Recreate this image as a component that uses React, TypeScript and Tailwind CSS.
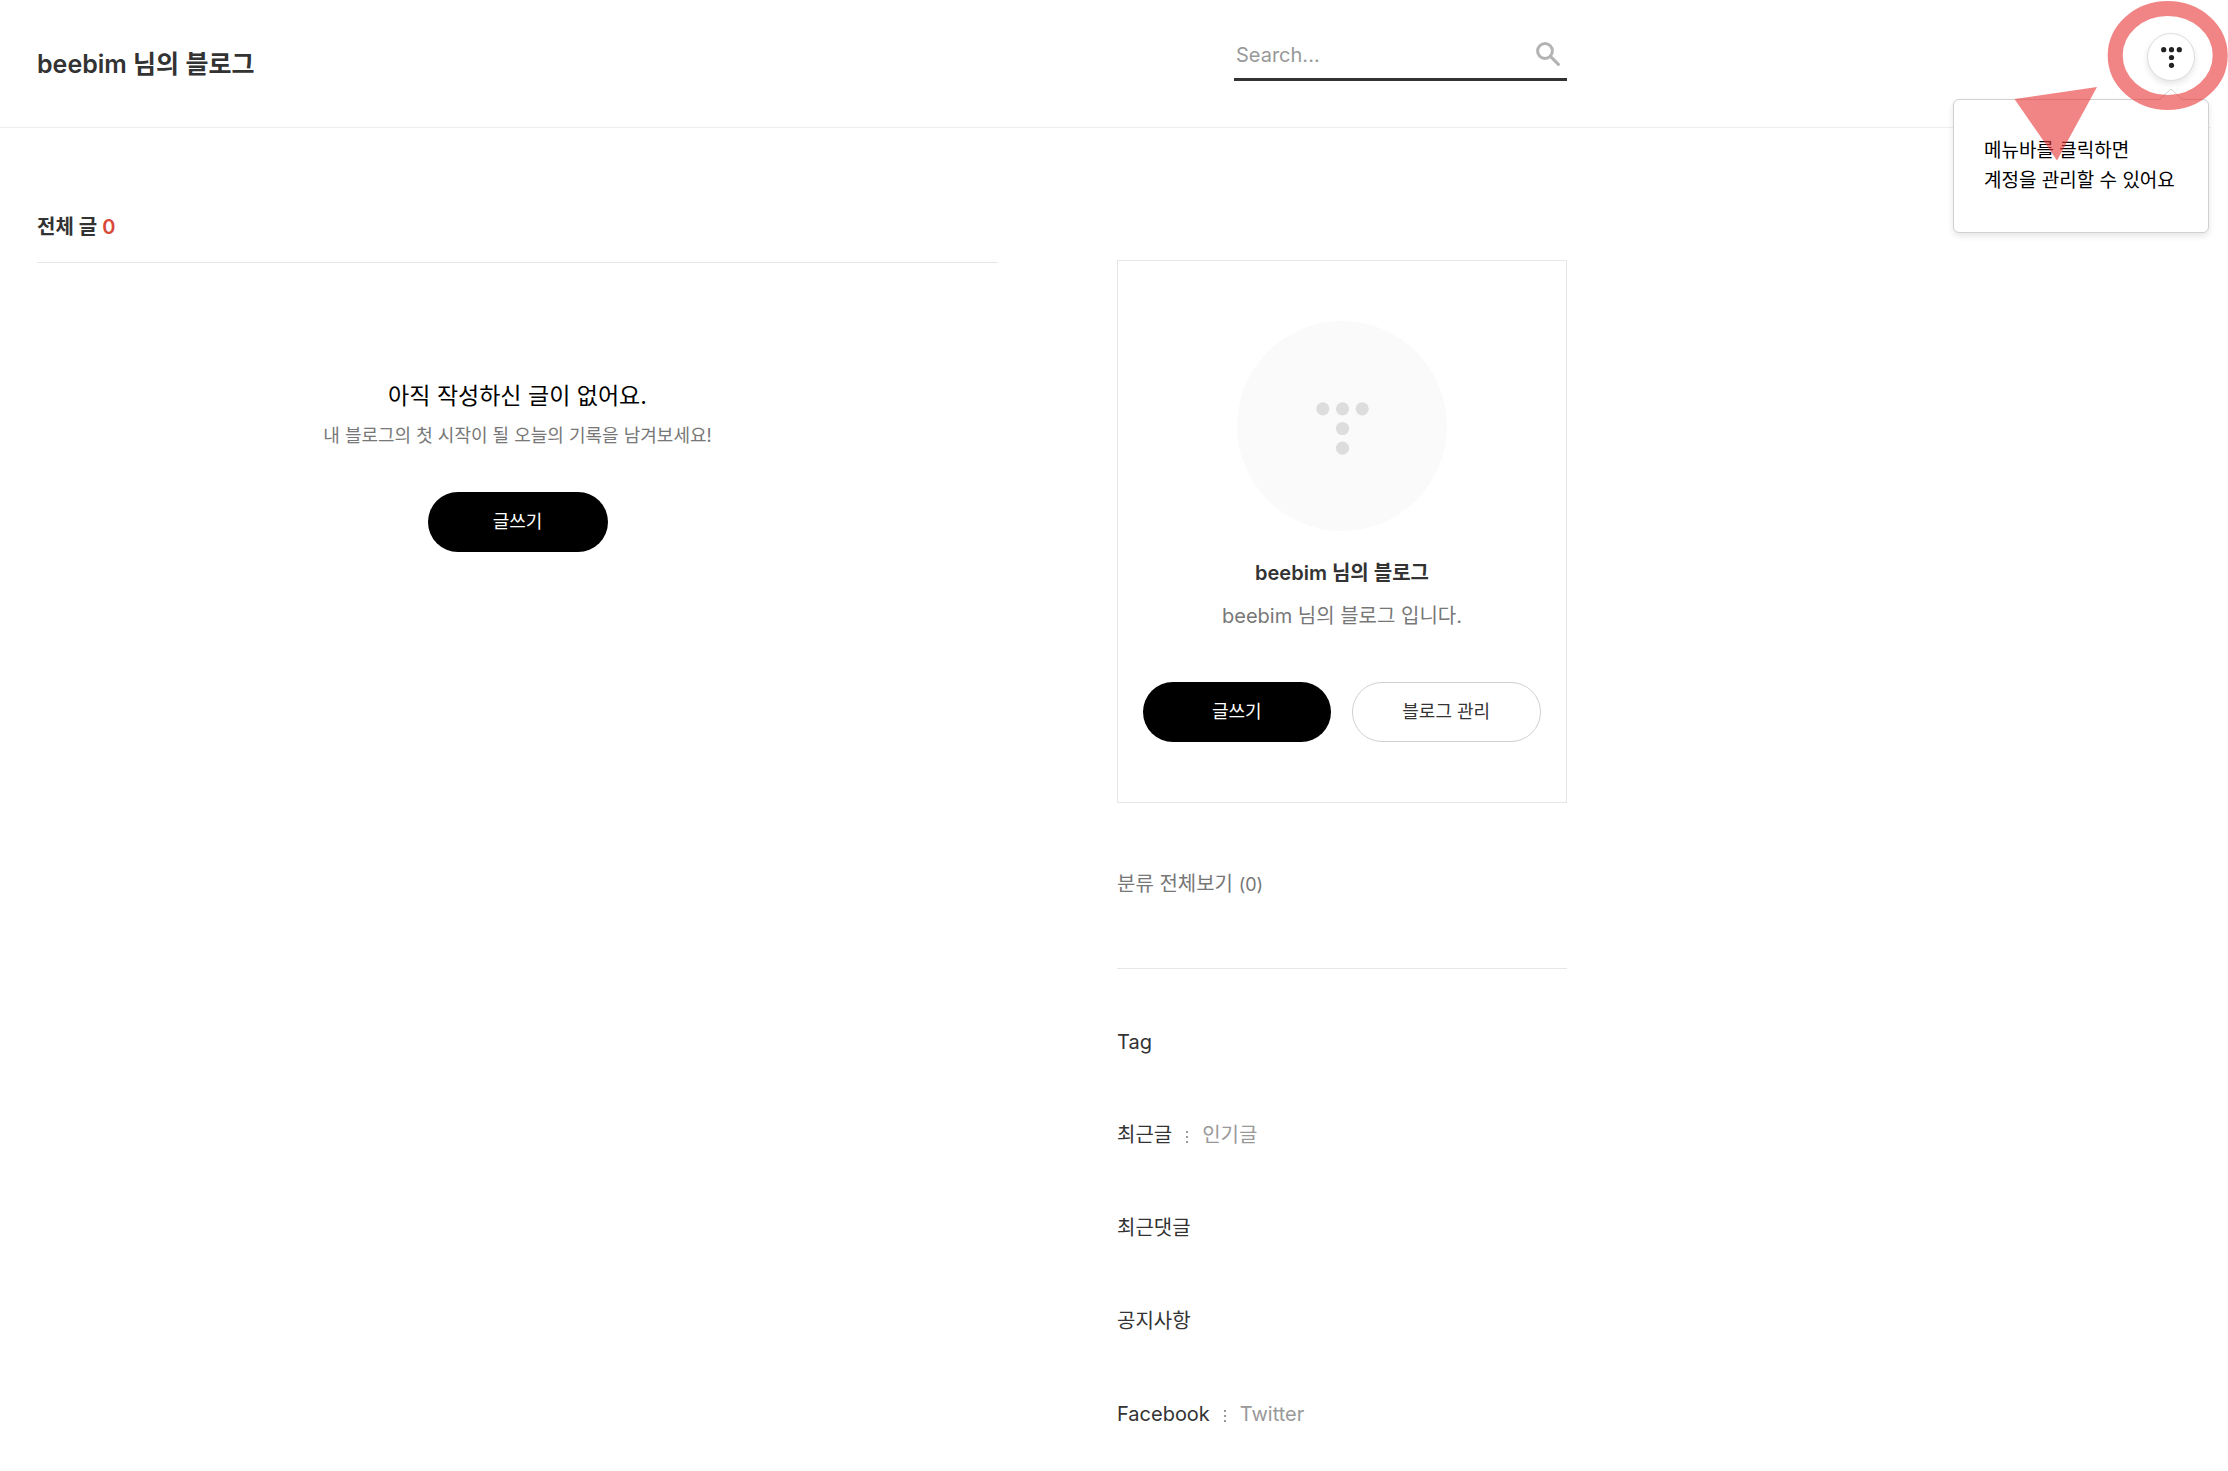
import { useState } from 'react';

const RECENT_TABS = ['최근글', '인기글'];
const SOCIAL_TABS = ['Facebook', 'Twitter'];

// T-shaped five dot logo
function TistoryMark({ className }: { className?: string }) {
  return (
    <svg viewBox="0 0 53 53" className={className} fill="currentColor" aria-hidden="true">
      <circle cx="6.8" cy="6.8" r="6.6" />
      <circle cx="26.5" cy="6.8" r="6.6" />
      <circle cx="46.2" cy="6.8" r="6.6" />
      <circle cx="26.5" cy="26.5" r="6.6" />
      <circle cx="26.5" cy="46.2" r="6.6" />
    </svg>
  );
}

function TabRow({ tabs }: { tabs: string[] }) {
  const [active, setActive] = useState(tabs[0]);

  return (
    <div className="flex items-center text-xl leading-[30px]">
      {tabs.map((tab, i) => (
        <div key={tab} className="flex items-center">
          {i > 0 && (
            <span className="mx-[14px] mt-1 flex flex-col gap-[3px]">
              <i className="h-[2px] w-[2px] bg-[#999]" />
              <i className="h-[2px] w-[2px] bg-[#999]" />
              <i className="h-[2px] w-[2px] bg-[#999]" />
            </span>
          )}
          <button onClick={() => setActive(tab)} className={tab === active ? 'text-[#333]' : 'text-[#999]'}>
            {tab}
          </button>
        </div>
      ))}
    </div>
  );
}

export default function App() {
  const [query, setQuery] = useState('');

  return (
    <div className="relative min-h-screen overflow-x-hidden bg-white pb-6 font-[Inter,'Noto_Sans_CJK_KR',sans-serif] text-[#333]">
      <header className="mr-[17px] border-b border-[#eee]">
        <div className="flex h-[127px] w-full max-w-[1604px] justify-between px-[37px]">
          <h1 className="self-center pt-[2px] text-[25px] font-semibold">
            <a href="#">beebim 님의 블로그</a>
          </h1>
          <form className="mt-[30px] flex h-[51px] w-[333px] items-center border-b-[3px] border-[#333]" onSubmit={e => e.preventDefault()}>
            <input
              type="text"
              aria-label="Search"
              placeholder="Search..."
              value={query}
              onChange={e => setQuery(e.target.value)}
              className="min-w-0 flex-1 px-[2px] pt-[2px] text-xl outline-none placeholder:text-[#999]"
            />
            <button type="submit" aria-label="검색" className="mr-[7px]">
              <svg viewBox="0 0 24 24" className="h-6 w-6" fill="none" stroke="#b3b3b3" strokeWidth="3">
                <circle cx="9" cy="9" r="7.4" />
                <path d="M14.4 14.4 L22.4 22.4" strokeLinecap="round" />
              </svg>
            </button>
          </form>
        </div>
      </header>

      <div className="flex w-full max-w-[1604px] gap-[119px] px-[37px]">
        <main className="min-w-0 flex-1 pt-[84px]">
          <h2 className="border-b border-[#e6e6e6] pb-5 text-xl leading-[30px] font-semibold">
            전체 글 <span className="text-[#d8493a]">0</span>
          </h2>
          <div className="flex flex-col items-center pt-[115px] text-center">
            <strong className="text-[23px] leading-9 font-normal text-black">아직 작성하신 글이 없어요.</strong>
            <p className="mt-2 text-lg leading-7 text-[#777]">내 블로그의 첫 시작이 될 오늘의 기록을 남겨보세요!</p>
            <a href="#" className="mt-[42px] flex h-[60px] w-[180px] items-center justify-center rounded-full bg-black text-lg text-white">
              글쓰기
            </a>
          </div>
        </main>

        <aside className="w-[450px] shrink-0 pt-[132px]">
          <section className="flex flex-col items-center border border-[#e6e6e6] px-[25px] pt-[60px] pb-[60px]">
            <div className="flex h-[210px] w-[210px] items-center justify-center rounded-full bg-[#fafafa] pt-[5px]">
              <TistoryMark className="h-[53px] w-[53px] text-[#ddd]" />
            </div>
            <strong className="mt-[27px] text-xl leading-[30px] font-semibold">beebim 님의 블로그</strong>
            <p className="mt-[13px] text-xl leading-[30px] text-[#777]">beebim 님의 블로그 입니다.</p>
            <div className="mt-[51px] flex w-full gap-[21px]">
              <a href="#" className="flex h-[60px] flex-1 items-center justify-center rounded-full bg-black text-lg text-white">
                글쓰기
              </a>
              <a href="#" className="flex h-[60px] flex-1 items-center justify-center rounded-full border border-[#d0d0d0] text-lg">
                블로그 관리
              </a>
            </div>
          </section>

          <nav className="border-b border-[#e6e6e6] pt-[66px] pb-[69px]">
            <a href="#" className="text-xl leading-[30px] text-[#777]">
              분류 전체보기 <span className="text-lg">(0)</span>
            </a>
          </nav>

          <div className="flex flex-col gap-[63px] pt-[58px] text-xl leading-[30px]">
            <h3>Tag</h3>
            <TabRow tabs={RECENT_TABS} />
            <h3>최근댓글</h3>
            <h3>공지사항</h3>
            <TabRow tabs={SOCIAL_TABS} />
          </div>
        </aside>
      </div>

      {/* Account menu and its hint */}
      <div className="absolute top-[33px] right-[19px] flex flex-col items-end">
        <button
          aria-label="메뉴바"
          className="mr-[14px] flex h-12 w-12 items-center justify-center rounded-full border border-[#ddd] bg-white shadow-[0_3px_6px_rgba(0,0,0,0.1)]"
        >
          <TistoryMark className="h-[21px] w-[21px] text-[#222]" />
        </button>
        <div className="relative mt-[18px] w-64 rounded-md border border-[#d0d0d0] bg-white px-[30px] pt-9 pb-9 text-[19px] leading-[30px] whitespace-nowrap text-black shadow-[0_3px_6px_rgba(0,0,0,0.1)]">
          <svg viewBox="0 0 26 13" className="absolute -top-3 right-6 h-[13px] w-[26px]">
            <path d="M1 12 L13 1 L25 12" fill="#fff" stroke="#d0d0d0" />
          </svg>
          메뉴바를 클릭하면
          <br />
          계정을 관리할 수 있어요
        </div>
      </div>

      {/* Marker drawn over the account menu */}
      <svg viewBox="0 0 216 164" className="pointer-events-none absolute top-0 right-0 h-[164px] w-[216px]">
        <g fill="#e93434" stroke="#e93434" opacity="0.6">
          <ellipse cx="155.7" cy="55.5" rx="52.5" ry="47" fill="none" strokeWidth="15" />
          <path d="M2.5 99 L85 87 L45 160.5 Z" stroke="none" />
        </g>
      </svg>
    </div>
  );
}
